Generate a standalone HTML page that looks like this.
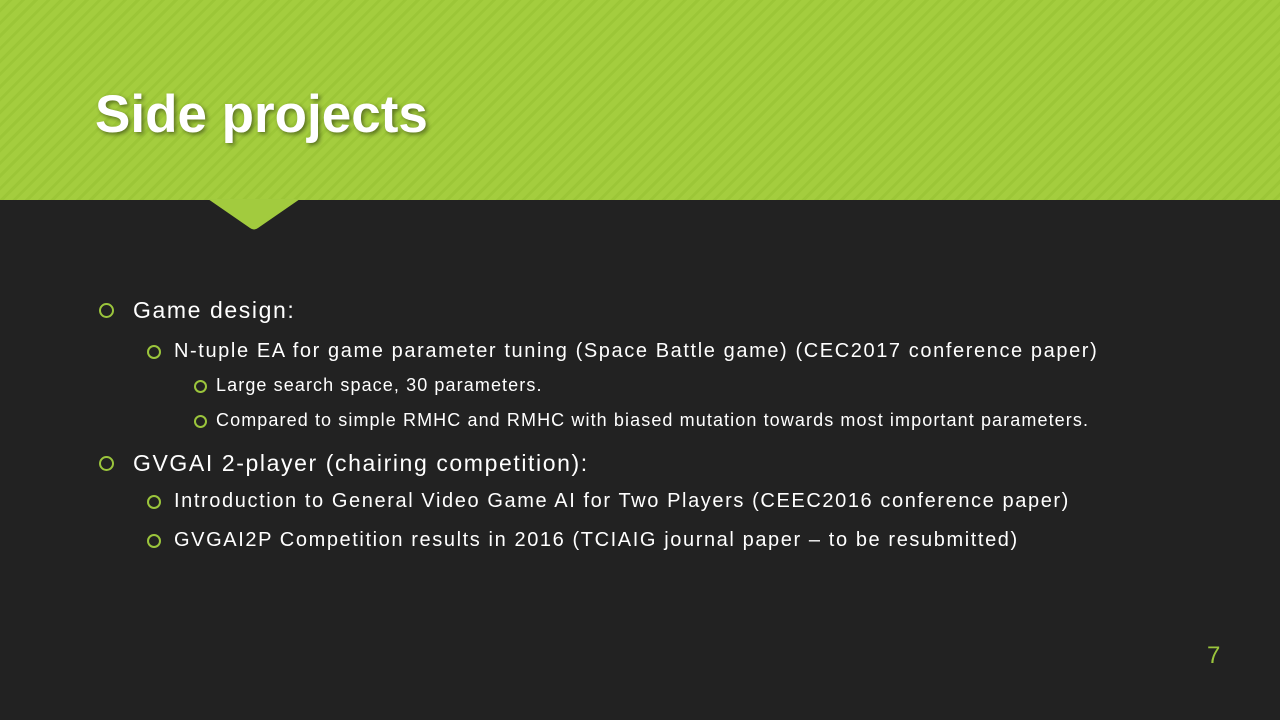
<!DOCTYPE html>
<html><head><meta charset="utf-8"><style>
html,body{margin:0;padding:0}
body{width:1280px;height:720px;background:#222;position:relative;overflow:hidden;font-family:"Liberation Sans",sans-serif;color:#fff}
.hdr{position:absolute;left:0;top:0;width:1280px;height:200px;background:repeating-linear-gradient(135deg,#a4cd3e 0 6px,#9cc637 6px 9px)}
.title{position:absolute;left:95px;top:84px;font-size:53px;font-weight:bold;text-shadow:2px 2px 4px rgba(0,0,0,.45);white-space:nowrap}
.l{position:absolute;white-space:nowrap}
.l1{font-size:23px;letter-spacing:1.6px;left:133px}
.l2{font-size:20px;letter-spacing:1.6px;left:174px}
.l3{font-size:18px;letter-spacing:1.1px;left:216px}
.b{position:absolute;border:2px solid #9bc53c;border-radius:50%;box-sizing:border-box}
.num{position:absolute;left:1207px;top:642px;font-size:24px;color:#9bc53c}
</style></head><body>
<div class="hdr"></div>
<svg style="position:absolute;left:0;top:0" width="1280" height="240"><path d="M208 199 L250 228 Q254 231 258 228 L300 199 Z" fill="#a2cb3e"/></svg>
<div class="title">Side projects</div>

<div class="b" style="left:99px;top:303px;width:15px;height:15px"></div>
<div class="l l1" style="top:297px">Game design:</div>
<div class="b" style="left:147px;top:345px;width:14px;height:14px"></div>
<div class="l l2" style="top:340px">N-tuple EA for game parameter tuning (Space Battle game) (CEC2017 conference paper)</div>
<div class="b" style="left:194px;top:380px;width:13px;height:13px"></div>
<div class="l l3" style="top:375px">Large search space, 30 parameters.</div>
<div class="b" style="left:194px;top:415px;width:13px;height:13px"></div>
<div class="l l3" style="top:410px">Compared to simple RMHC and RMHC with biased mutation towards most important parameters.</div>
<div class="b" style="left:99px;top:456px;width:15px;height:15px"></div>
<div class="l l1" style="top:450px">GVGAI 2-player (chairing competition):</div>
<div class="b" style="left:147px;top:495px;width:14px;height:14px"></div>
<div class="l l2" style="top:490px">Introduction to General Video Game AI for Two Players (CEEC2016 conference paper)</div>
<div class="b" style="left:147px;top:534px;width:14px;height:14px"></div>
<div class="l l2" style="top:529px">GVGAI2P Competition results in 2016 (TCIAIG journal paper – to be resubmitted)</div>
<div class="num">7</div>
</body></html>
